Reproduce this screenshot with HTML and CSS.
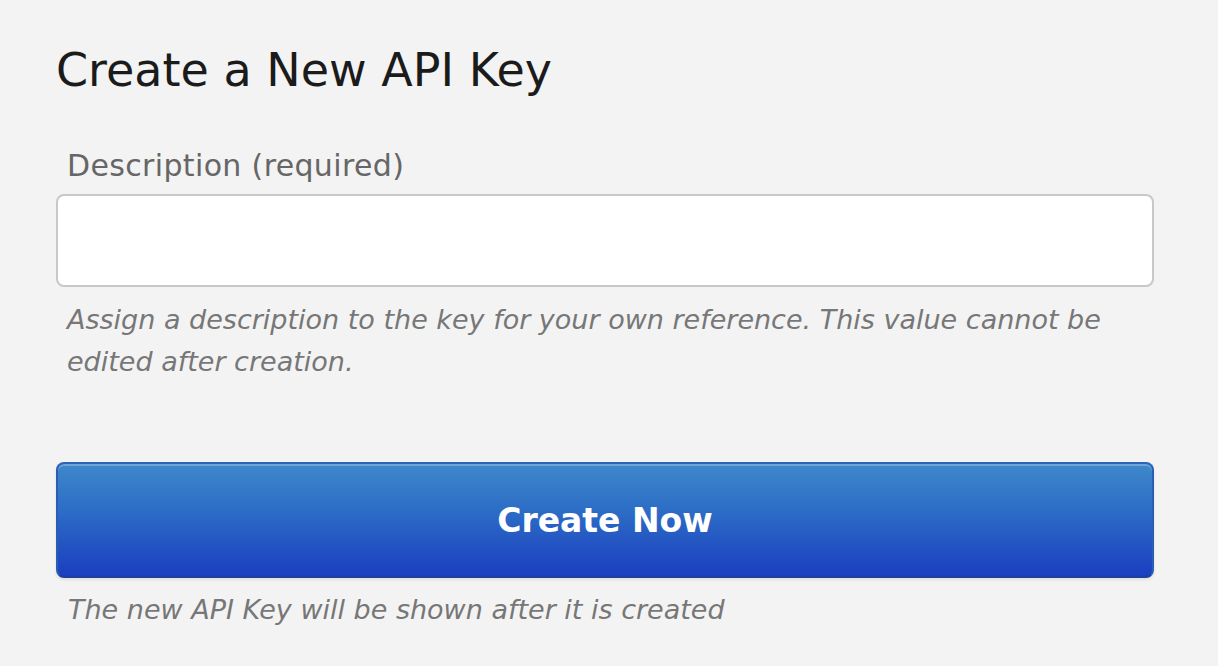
FILE: index.html
```html
<!DOCTYPE html>
<html>
<head>
<meta charset="utf-8">
<link rel="stylesheet" href="styles.css">
</head>
<body>
<div class="page">
  <h1 class="title">Create a New API Key</h1>
  <label class="label" for="desc">Description (required)</label>
  <input class="field" id="desc" type="text">
  <p class="help">Assign a description to the key for your own reference. This value cannot be edited after creation.</p>
  <button class="btn" type="button">Create Now</button>
  <p class="note">The new API Key will be shown after it is created</p>
</div>
</body>
</html>
```
FILE: styles.css
```css
html, body {
  margin: 0;
  padding: 0;
  background: #f3f3f3;
}
body {
  font-family: "DejaVu Sans", "Liberation Sans", sans-serif;
}
.page {
  padding: 38px 64px 0 56px;
  display: flex;
  flex-direction: column;
}
.title {
  margin: 0;
  font-size: 46px;
  font-weight: normal;
  color: #1b1b1b;
  line-height: 64px;
}
.label {
  margin: 44px 0 0 11px;
  font-size: 30px;
  letter-spacing: 0.35px;
  color: #666;
  line-height: 40px;
}
.field {
  margin: 8px 0 0 0;
  height: 93px;
  box-sizing: border-box;
  border: 2px solid #c8c8c8;
  border-radius: 8px;
  background: #fff;
  width: 100%;
}
.help {
  margin: 12px 0 0 11px;
  font-size: 27px;
  font-style: italic;
  color: #777;
  line-height: 42px;
}
.btn {
  margin: 79px 0 0 0;
  height: 116px;
  border: 2px solid #2a5db4;
  border-top-color: #2e63b8;
  border-bottom-color: #1e3f9a;
  border-radius: 8px;
  background: linear-gradient(#3e88ca, #2d6ec6 40%, #1b3ec0);
  box-shadow: inset 0 2px 0 rgba(255,255,255,0.25), 0 2px 3px rgba(0,0,0,0.08);
  color: #fff;
  font-family: "DejaVu Sans", sans-serif;
  font-size: 33px;
  font-weight: bold;
  width: 100%;
}
.note {
  margin: 11px 0 0 12px;
  font-size: 27px;
  font-style: italic;
  color: #777;
  line-height: 42px;
}
```
